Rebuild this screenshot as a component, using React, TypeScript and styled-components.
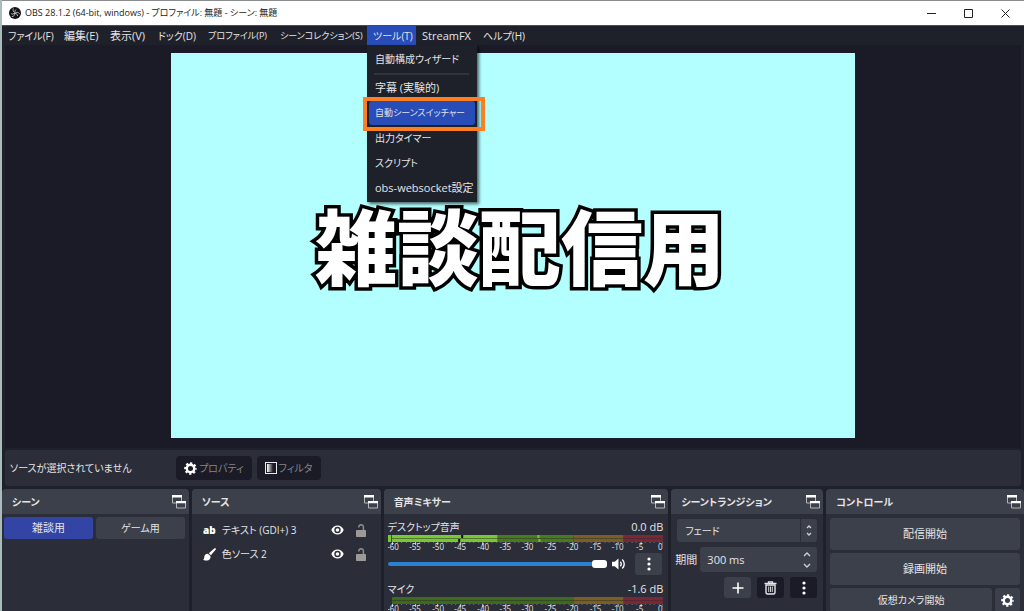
import React from 'react';
import styled, { createGlobalStyle, css } from 'styled-components';

const color = {
  window: '#1f212a',
  preview: '#1a1b26',
  panel: '#2b2d38',
  raised: '#3c404a',
  text: '#e4e4e8',
  dim: '#85868c',
  accent: '#284cb8',
  selected: '#3245a5',
};

const GlobalStyle = createGlobalStyle`
  * { box-sizing: border-box; }
  body {
    margin: 0;
    background: #a9bcbb;
    font-family: "Open Sans", "Noto Sans CJK JP", sans-serif;
    font-size: 10px;
    line-height: 16px;
    font-feature-settings: "palt";
    color: ${color.text};
  }
  button, input, select {
    font: inherit;
    font-feature-settings: inherit;
    color: inherit;
    border: 0;
    margin: 0;
    padding: 0;
  }
  h1, h2, ul { margin: 0; padding: 0; font: inherit; list-style: none; }
  svg { display: block; flex: none; }
`;

const Window = styled.div`
  display: flex;
  flex-direction: column;
  height: 100vh;
  margin-left: 2px;
  border-top: 1px solid #8b8c90;
  overflow: hidden;
  background: ${color.window};
`;

const TitleBar = styled.header`
  display: flex;
  align-items: center;
  flex: none;
  height: 24px;
  padding-left: 7px;
  background: #fff;
  color: #222;
`;

const Title = styled.h1`
  flex: 1;
  padding-left: 4px;
  font-size: 9px;
  white-space: nowrap;
`;

const CaptionButton = styled.button`
  display: grid;
  place-items: center;
  width: 37px;
  height: 24px;
  background: none;
`;

type Size = 'large' | 'small';

const textSize = css<{ $size?: Size }>`
  font-size: ${(p) => (p.$size === 'large' ? 11 : p.$size === 'small' ? 9 : 10)}px;
`;

const MenuBar = styled.nav`
  display: grid;
  flex: none;
  grid-template-columns: 56px 46px 48px 50px 72px 93px 49px 61px 52px;
  height: 20px;
  border-top: 1px solid #4b4c54;
`;

const MenuSlot = styled.div`
  position: relative;
  display: flex;
`;

const MenuButton = styled.button<{ $open?: boolean; $size?: Size }>`
  ${textSize}
  flex: 1;
  padding-left: 6px;
  text-align: left;
  white-space: nowrap;
  background: ${(p) => (p.$open ? color.accent : 'none')};
`;

const Menu = styled.ul`
  position: absolute;
  z-index: 2;
  top: 100%;
  left: 0;
  display: flex;
  flex-direction: column;
  gap: 1px;
  width: 110px;
  padding: 2px 2px 2px;
  background: ${color.window};
  box-shadow: 2px 2px 3px rgba(0, 0, 0, 0.6);
`;

const MenuItem = styled.button<{ $active?: boolean; $size?: Size }>`
  ${textSize}
  display: block;
  width: 100%;
  height: 24px;
  padding-left: 6px;
  text-align: left;
  white-space: nowrap;
  border-radius: 3px;
  background: ${(p) => (p.$active ? color.accent : 'none')};
`;

const MenuEntry = styled.li`
  position: relative;
`;

const Separator = styled.li`
  height: 2px;
  margin: 1px 6px 0 5px;
  background: #30323d;
`;

const Highlight = styled.span`
  position: absolute;
  inset: -4px -10px -6px -6px;
  border: 4px solid #fd7f22;
  pointer-events: none;
`;

const Preview = styled.main`
  display: flex;
  justify-content: center;
  flex: 1;
  min-height: 0;
  margin: 0 3px;
  padding: 8px 0 10px;
  background: ${color.preview};
`;

const Canvas = styled.div`
  display: flex;
  align-items: center;
  justify-content: center;
  height: 100%;
  aspect-ratio: 16 / 9;
  padding: 0 0 4px 14px;
  background: #b3ffff;
`;

const Caption = styled.p`
  margin: 0;
  font-family: "Noto Sans CJK JP", sans-serif;
  font-size: 82px;
  line-height: 80px;
  font-weight: 900;
  font-feature-settings: normal;
  white-space: nowrap;
  color: #fff;
  -webkit-text-stroke: 7px #000;
  paint-order: stroke fill;
  stroke-linejoin: round;
`;

const ContextBar = styled.section`
  display: flex;
  align-items: center;
  flex: none;
  height: 36px;
  margin: 2px 3px 3px;
  padding-left: 5px;
  gap: 5px;
  border-radius: 3px;
  background: ${color.panel};
`;

const ContextText = styled.span`
  width: 161px;
  white-space: nowrap;
`;

const ContextButton = styled.button`
  display: flex;
  align-items: center;
  justify-content: center;
  gap: 2px;
  height: 24px;
  padding: 0 8px;
  border-radius: 4px;
  background: ${color.preview};
  color: ${color.dim};
  white-space: nowrap;
`;

const Docks = styled.div`
  display: grid;
  flex: none;
  grid-template-columns: 187fr 189fr 285fr 152fr 198fr;
  gap: 3px;
  height: 122px;
`;

const DockFrame = styled.section`
  min-width: 0;
  overflow: hidden;
  border-radius: 4px 4px 0 0;
  background: ${color.panel};
`;

const DockHeader = styled.header`
  display: flex;
  align-items: center;
  justify-content: space-between;
  height: 25px;
  padding: 0 3px 0 10px;
  background: ${color.raised};
`;

const DockTitle = styled.h2`
  font-weight: 600;
  white-space: nowrap;
`;

const IconButton = styled.button`
  display: grid;
  place-items: center;
  background: none;
`;

const SceneGrid = styled.div`
  display: grid;
  grid-template-columns: 1fr 1fr;
  gap: 3px;
  padding: 3px 4px 0 2px;
`;

const SceneButton = styled.button<{ $selected?: boolean; $size?: Size }>`
  ${textSize}
  height: 22px;
  border-radius: 3px;
  background: ${(p) => (p.$selected ? color.selected : color.raised)};
`;

const SourceList = styled.ul`
  padding: 4px 13px 0 11px;
`;

const SourceRow = styled.li`
  display: grid;
  grid-template-columns: 19px 1fr 25px 12px;
  align-items: center;
  height: 24px;
  white-space: nowrap;
`;

const MixerBody = styled.div`
  padding: 5px 5px 0 4px;
`;

const Channel = styled.div`
  height: 62px;
`;

const ChannelTop = styled.div`
  display: flex;
  justify-content: space-between;
  height: 16px;
`;

const Level = styled.span`
  font-size: 11px;
`;

const ChannelControls = styled.div`
  display: flex;
  align-items: center;
  gap: 5px;
  height: 22px;
  padding-right: 1px;
`;

const Slider = styled.input`
  flex: 1;
  min-width: 0;
  height: 8px;
  appearance: none;
  background: none;
  &::-webkit-slider-runnable-track {
    height: 4px;
    border-radius: 2px;
    background: #2b80d2;
  }
  &::-webkit-slider-thumb {
    appearance: none;
    width: 15px;
    height: 8px;
    margin-top: -2px;
    border-radius: 3px;
    background: #fff;
  }
`;

const MoreButton = styled.button`
  display: grid;
  place-items: center;
  width: 27px;
  height: 22px;
  margin-left: 4px;
  border-radius: 3px;
  background: ${color.raised};
`;

const TransitionBody = styled.div`
  display: flex;
  flex-direction: column;
  gap: 5px;
  padding: 5px 6px 0 4px;
`;

const field = css`
  border-radius: 3px;
  background: ${color.raised};
`;

const SelectBox = styled.div`
  ${field}
  position: relative;
  display: flex;
  height: 23px;
  margin-left: 2px;
`;

const Select = styled.select`
  flex: 1;
  appearance: none;
  padding-left: 8px;
  background: none;
`;

const Chevrons = styled.span<{ $split?: boolean }>`
  position: absolute;
  inset: 0 0 0 auto;
  display: grid;
  place-items: center;
  width: ${(p) => (p.$split ? 17 : 20)}px;
  border-left: ${(p) => (p.$split ? `1px solid ${color.panel}` : '0')};
  pointer-events: none;
`;

const Duration = styled.label`
  display: flex;
  align-items: center;
  gap: 3px;
  font-size: 11px;
  white-space: nowrap;
`;

const SpinBox = styled.span`
  ${field}
  position: relative;
  display: flex;
  flex: 1;
  min-width: 0;
  height: 25px;
`;

const SpinInput = styled.input`
  width: 100%;
  padding-left: 7px;
  background: none;
`;

const Tools = styled.div`
  display: flex;
  justify-content: flex-end;
  gap: 6px;
`;

const ToolButton = styled.button<{ $dark?: boolean }>`
  display: grid;
  place-items: center;
  width: 27px;
  height: 21px;
  border-radius: 3px;
  background: ${(p) => (p.$dark ? color.preview : color.raised)};
`;

const ControlsBody = styled.div`
  display: grid;
  grid-template-columns: 1fr 25px;
  gap: 3px;
  padding: 4px 4px 0;
`;

const ControlButton = styled.button<{ $wide?: boolean }>`
  ${field}
  display: grid;
  place-items: center;
  grid-column: ${(p) => (p.$wide ? '1 / -1' : 'auto')};
  height: ${(p) => (p.$wide ? 32 : 24)}px;
  font-size: ${(p) => (p.$wide ? 11 : 10)}px;
`;

const ObsLogo = () => (
  <svg width="12" height="12" viewBox="0 0 24 24" aria-hidden="true">
    <circle cx="12" cy="12" r="12" fill="#111" />
    {[0, 120, 240].map((angle) => (
      <path
        key={angle}
        transform={`rotate(${angle} 12 12)`}
        d="M8.500 3.500c-1.500 3.500 0 7 4 7.800-1.200-2.600-.6-5 1.500-6.300"
        fill="none"
        stroke="#d8d8d8"
        strokeWidth="1.500"
        strokeLinecap="round"
      />
    ))}
  </svg>
);

const GearIcon = () => (
  <svg width="13" height="13" viewBox="0 0 14 14" fill="none" stroke="#fff" aria-hidden="true">
    <circle cx="7" cy="7" r="4" strokeWidth="2.6" />
    <circle cx="7" cy="7" r="5.8" strokeWidth="2" strokeDasharray="2.4 2.155" strokeDashoffset="1.2" />
  </svg>
);

const FilterIcon = () => (
  <svg width="12" height="12" viewBox="0 0 12 12" aria-hidden="true">
    <defs>
      <linearGradient id="fade">
        <stop offset="0" stopColor="#fff" />
        <stop offset="1" stopColor="#1a1b26" />
      </linearGradient>
    </defs>
    <rect x="0.5" y="0.5" width="11" height="11" fill={color.preview} stroke="#e8e8ea" />
    <rect x="2" y="2" width="6" height="8" fill="url(#fade)" />
  </svg>
);

const BrushIcon = () => (
  <svg width="13" height="13" viewBox="0 0 13 13" fill="#fff" aria-hidden="true">
    <path d="M11.200.4q1-.7 1.500 0 .5.600-.1 1.400L7.900 7.300 5.800 5.300z" />
    <path d="M4.900 5.700l2.500 2.400c.6 2.600-1.200 4.500-3.600 4.500-1.500 0-2.900-.3-3.600-1.200.9-.4 1-1 1-2.100 0-2.200 1.700-3.800 3.700-3.600z" />
  </svg>
);

const PopOutIcon = () => (
  <svg width="14" height="14" viewBox="0 0 14 14" aria-hidden="true">
    <path d="M.5 1h9v7h-9z" fill="none" stroke="#b4b6bc" />
    <path d="M0 0h10v2.500H0z" fill="#fff" />
    <path d="M4.5 6.5h9v6.5h-9z" fill={color.raised} stroke="#b4b6bc" />
    <path d="M4 6h10v2.200H4z" fill="#fff" />
  </svg>
);

const EyeIcon = () => (
  <svg width="13" height="10" viewBox="0 0 13 10" aria-hidden="true">
    <path d="M6.500.5C3.600.5 1.300 2.300.3 5c1 2.700 3.300 4.500 6.200 4.500S11.700 7.700 12.700 5c-1-2.700-3.300-4.500-6.200-4.500z" fill="#fff" />
    <circle cx="6.500" cy="5" r="3.200" fill={color.panel} />
    <circle cx="6.500" cy="5" r="1.800" fill="#fff" />
  </svg>
);

const UnlockIcon = () => (
  <svg width="10" height="13" viewBox="0 0 10 13" aria-hidden="true">
    <path d="M2.800 3.500V3a2.300 2.300 0 0 1 4.600 0v4" fill="none" stroke="#8f8e8b" strokeWidth="1.500" />
    <rect y="6" width="10" height="7" rx="0.800" fill="#9b9a96" />
  </svg>
);

const SpeakerIcon = () => (
  <svg width="14" height="12" viewBox="0 0 14 12" aria-hidden="true">
    <path d="M0 3.800h2.700L6.500.6v10.800L2.700 8.200H0z" fill="#fff" />
    <path d="M8.300 3.800a3 3 0 0 1 0 4.400M10.200 1.500a6 6 0 0 1 0 9" fill="none" stroke="#fff" strokeWidth="1.400" />
  </svg>
);

const DotsIcon = () => (
  <svg width="4" height="14" viewBox="0 0 4 14" fill="#fff" aria-hidden="true">
    <circle cx="2" cy="2" r="1.600" />
    <circle cx="2" cy="7" r="1.600" />
    <circle cx="2" cy="12" r="1.600" />
  </svg>
);

const PlusIcon = () => (
  <svg width="12" height="12" viewBox="0 0 12 12" stroke="#fff" strokeWidth="1.600" aria-hidden="true">
    <path d="M6 .5v11M.5 6h11" />
  </svg>
);

const TrashIcon = () => (
  <svg width="13" height="14" viewBox="0 0 13 14" fill="none" stroke="#e4e4e8" aria-hidden="true">
    <path d="M.5 2.500h12M4.500 2V.8h4V2" strokeWidth="1.300" />
    <path d="M2 4v7.500q0 1.500 1.500 1.500h6q1.500 0 1.500-1.500V4z" strokeWidth="1.400" />
    <path d="M4.700 5.500v5.500M6.500 5.500v5.500M8.300 5.500v5.500" strokeWidth="0.900" />
  </svg>
);

const ChevronsIcon = ({ tall }: { tall?: boolean }) => {
  const h = tall ? 16 : 11;
  const w = tall ? 8 : 6;
  return (
    <svg width={w} height={h} viewBox={`0 0 ${w} ${h}`} fill="none" stroke="#d0d1d6" strokeWidth="1.300" aria-hidden="true">
      <path d={tall ? 'M1 4l3-3 3 3M1 12l3 3 3-3' : 'M1 3l2-2 2 2M1 8l2 2 2-2'} />
    </svg>
  );
};

const TICKS = [-60, -55, -50, -45, -40, -35, -30, -25, -20, -15, -10, -5, 0];
const GREEN = '#4a7a1e';
const LIME = '#79c832';

const Meter = ({ live }: { live?: boolean }) => (
  <svg width="100%" viewBox="0 0 275 18" aria-hidden="true">
    <rect x="4" width="181" height="7" fill={live ? GREEN : '#3f6a1c'} />
    <rect x="185" width="50" height="7" fill="#7b5f22" />
    <rect x="235" width="40" height="7" fill="#7c2734" />
    {live && (
      <g>
        <rect width="109" height="7" fill={LIME} />
        <rect x="3" width="1" height="7" fill="#35591a" />
        <rect x="73" width="2" height="3" fill="#0b1205" />
        <rect x="70" y="4" width="2" height="3" fill="#0b1205" />
        <rect x="149" width="2" height="3" fill={LIME} />
        <rect x="150" y="4" width="2" height="3" fill={LIME} />
      </g>
    )}
    <rect y="3" x="4" width="271" height="1" fill="#2b2d38" opacity="0.5" />
    {Array.from({ length: 61 }, (_, i) => (
      <rect key={i} x={Math.min(274, Math.round(4 + i * 4.5))} y="7" width="1" height={i % 5 ? 1 : 3} fill={i % 5 ? '#6d6f78' : '#c8c9ce'} />
    ))}
    {TICKS.map((t, i) => (
      <text
        key={t}
        x={t === 0 ? 274 : Math.round(5 + i * 22.4)}
        y="15"
        fontSize="8"
        textAnchor={t === 0 ? 'end' : 'middle'}
        fill="#e4e4e8"
      >
        {t}
      </text>
    ))}
  </svg>
);

const Dock = ({ title, children }: { title: string; children: React.ReactNode }) => (
  <DockFrame>
    <DockHeader>
      <DockTitle>{title}</DockTitle>
      <IconButton aria-label={title}>
        <PopOutIcon />
      </IconButton>
    </DockHeader>
    {children}
  </DockFrame>
);

const ChannelStrip = ({ name, level, live }: { name: string; level: string; live?: boolean }) => (
  <Channel>
    <ChannelTop>
      <span>{name}</span>
      <Level>{level}</Level>
    </ChannelTop>
    <Meter live={live} />
    <ChannelControls>
      <Slider type="range" min={0} max={100} defaultValue={100} aria-label={name} />
      <IconButton aria-label={name}>
        <SpeakerIcon />
      </IconButton>
      <MoreButton aria-label={name}>
        <DotsIcon />
      </MoreButton>
    </ChannelControls>
  </Channel>
);

const ToolsMenu = () => (
  <Menu>
    <MenuEntry><MenuItem>自動構成ウィザード</MenuItem></MenuEntry>
    <Separator />
    <MenuEntry><MenuItem $size="large">字幕 (実験的)</MenuItem></MenuEntry>
    <MenuEntry>
      <MenuItem $active $size="small">自動シーンスイッチャー</MenuItem>
      <Highlight />
    </MenuEntry>
    <MenuEntry><MenuItem>出力タイマー</MenuItem></MenuEntry>
    <MenuEntry><MenuItem>スクリプト</MenuItem></MenuEntry>
    <MenuEntry><MenuItem $size="large">obs-websocket設定</MenuItem></MenuEntry>
  </Menu>
);

const MENUS: { label: string; size?: Size; open?: boolean }[] = [
  { label: 'ファイル(F)' },
  { label: '編集(E)', size: 'large' },
  { label: '表示(V)', size: 'large' },
  { label: 'ドック(D)' },
  { label: 'プロファイル(P)', size: 'small' },
  { label: 'シーンコレクション(S)', size: 'small' },
  { label: 'ツール(T)', open: true },
  { label: 'StreamFX', size: 'large' },
  { label: 'ヘルプ(H)' },
];

export default function App() {
  return (
    <>
      <GlobalStyle />
      <Window>
        <TitleBar>
          <ObsLogo />
          <Title>OBS 28.1.2 (64-bit, windows) - プロファイル: 無題 - シーン: 無題</Title>
          <CaptionButton aria-label="最小化">
            <svg width="9" height="9" stroke="#222"><path d="M0 4.500h9" /></svg>
          </CaptionButton>
          <CaptionButton aria-label="最大化">
            <svg width="9" height="9" stroke="#222" fill="none"><path d="M.5.5h8v8h-8z" /></svg>
          </CaptionButton>
          <CaptionButton aria-label="閉じる">
            <svg width="9" height="9" stroke="#222"><path d="M.5.5l8 8M8.500.5l-8 8" /></svg>
          </CaptionButton>
        </TitleBar>
        <MenuBar>
          {MENUS.map((m) => (
            <MenuSlot key={m.label}>
              <MenuButton $open={m.open} $size={m.size}>{m.label}</MenuButton>
              {m.open && <ToolsMenu />}
            </MenuSlot>
          ))}
        </MenuBar>
        <Preview>
          <Canvas>
            <Caption>雑談配信用</Caption>
          </Canvas>
        </Preview>
        <ContextBar>
          <ContextText>ソースが選択されていません</ContextText>
          <ContextButton><GearIcon />プロパティ</ContextButton>
          <ContextButton><FilterIcon />フィルタ</ContextButton>
        </ContextBar>
        <Docks>
          <Dock title="シーン">
            <SceneGrid>
              <SceneButton $selected $size="large">雑談用</SceneButton>
              <SceneButton>ゲーム用</SceneButton>
            </SceneGrid>
          </Dock>
          <Dock title="ソース">
            <SourceList>
              <SourceRow>
                <svg width="14" height="16" viewBox="0 0 14 16" aria-hidden="true">
                  <text x="0" y="12" fontSize="10" fontWeight="800" fill="#fff">ab</text>
                </svg>
                <span>テキスト (GDI+) 3</span>
                <EyeIcon />
                <UnlockIcon />
              </SourceRow>
              <SourceRow>
                <BrushIcon />
                <span>色ソース 2</span>
                <EyeIcon />
                <UnlockIcon />
              </SourceRow>
            </SourceList>
          </Dock>
          <Dock title="音声ミキサー">
            <MixerBody>
              <ChannelStrip name="デスクトップ音声" level="0.0 dB" live />
              <ChannelStrip name="マイク" level="-1.6 dB" />
            </MixerBody>
          </Dock>
          <Dock title="シーントランジション">
            <TransitionBody>
              <SelectBox>
                <Select aria-label="シーントランジション">
                  <option>フェード</option>
                </Select>
                <Chevrons $split><ChevronsIcon /></Chevrons>
              </SelectBox>
              <Duration>
                期間
                <SpinBox>
                  <SpinInput defaultValue="300 ms" />
                  <Chevrons><ChevronsIcon tall /></Chevrons>
                </SpinBox>
              </Duration>
              <Tools>
                <ToolButton aria-label="追加"><PlusIcon /></ToolButton>
                <ToolButton $dark aria-label="削除"><TrashIcon /></ToolButton>
                <ToolButton $dark aria-label="メニュー"><DotsIcon /></ToolButton>
              </Tools>
            </TransitionBody>
          </Dock>
          <Dock title="コントロール">
            <ControlsBody>
              <ControlButton $wide>配信開始</ControlButton>
              <ControlButton $wide>録画開始</ControlButton>
              <ControlButton>仮想カメラ開始</ControlButton>
              <ControlButton aria-label="設定"><GearIcon /></ControlButton>
            </ControlsBody>
          </Dock>
        </Docks>
      </Window>
    </>
  );
}
